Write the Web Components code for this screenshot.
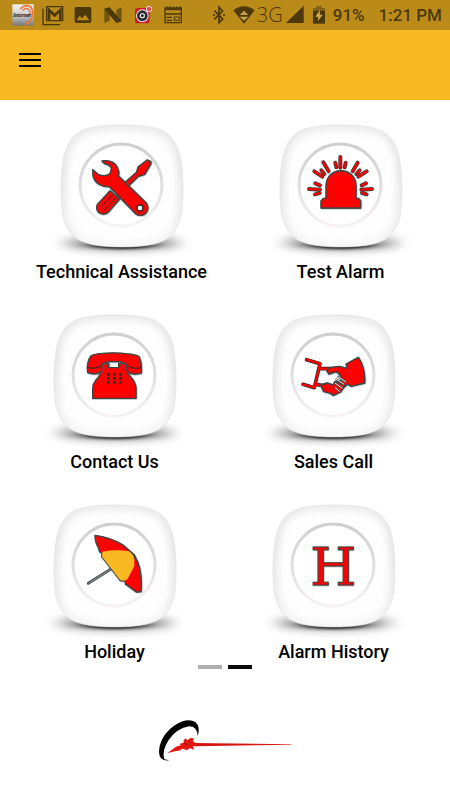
<!DOCTYPE html>
<html lang="en">
<head>
<meta charset="utf-8">
<meta name="viewport" content="width=device-width, initial-scale=1">
<title>Home</title>
<style>
html, body { margin: 0; background: #fff; font-family: Roboto, "Liberation Sans", sans-serif; color: #000; }
</style>
</head>
<body>
<home-screen></home-screen>
<script>
const define = (name, html) => {
  const template = document.createElement('template');
  template.innerHTML = html;
  customElements.define(name, class extends HTMLElement {
    constructor() {
      super();
      this.attachShadow({ mode: 'open' }).append(template.content.cloneNode(true));
    }
  });
};

define('status-bar', `
<style>
:host { display: flex; align-items: center; height: 30px; padding: 0 8px 0 12px; box-sizing: border-box; background: #bb8b1a; color: #4b380b; }
svg { display: block; flex: none; }
.group { display: flex; align-items: center; gap: 8px; }
.end { margin-left: auto; }
.network { display: flex; align-items: center; gap: 2px; }
.rate { font: 300 20px/30px "Open Sans", "Noto Sans", sans-serif; }
.text { font-size: 17px; line-height: 32px; font-weight: 500; white-space: nowrap; }
.time { margin-left: 6px; }
</style>
<div class="group">
  <svg width="22" height="22" viewBox="0 0 66 66">
    <defs><linearGradient id="g" x2="0" y2="1"><stop offset="0" stop-color="#f4f4f4"/><stop offset=".5" stop-color="#ccc"/><stop offset="1" stop-color="#777"/></linearGradient></defs>
    <path d="M1 1H65V65H1Z" fill="url(#g)"/>
    <path d="M25 16Q32 5 46 5Q61 7 62 25Q62 46 50 54Q47 59 40 62" fill="none" stroke="#f47432" stroke-width="5"/>
    <path d="M32 20Q38 12 46 14Q54 17 54 27Q52 35 45 36" fill="none" stroke="#f47432" stroke-width="4"/>
    <text x="3" y="38" font-family="Liberation Serif, serif" font-weight="700" font-style="italic" font-size="16" fill="#111">Interner</text>
  </svg>
  <svg width="22" height="22" viewBox="0 0 66 66" fill="none" stroke="#4b380b" stroke-width="4">
    <path d="M3 14V62H54"/><path d="M14 8H62V50H14Z"/><path d="M21 48V18L38 34L55 18V48" stroke-width="8"/>
  </svg>
  <svg width="22" height="22" viewBox="0 0 66 66"><path fill="#4b380b" fill-rule="evenodd" d="M13 9H53Q58 9 58 14V52Q58 57 53 57H13Q8 57 8 52V14Q8 9 13 9ZM14 49H52L40 32L30 43L23 35Z"/></svg>
  <svg width="22" height="22" viewBox="0 0 66 66"><path fill="#70540f" d="M7 14L23 10V50L7 57ZM43 17L59 10V52L43 56Z"/><path fill="#4b380b" d="M7 14L23 10L59 52L43 57Z"/></svg>
  <svg width="22" height="22" viewBox="0 0 66 66"><rect x="9" y="12" width="44" height="46" rx="8" fill="#d01d2b"/><circle cx="31" cy="35" r="19" fill="#eee"/><circle cx="31" cy="35" r="16" fill="#252b30"/><circle cx="31" cy="35" r="8" fill="#ddd"/><circle cx="31" cy="35" r="4" fill="#15191d"/><circle cx="51" cy="15" r="8" fill="#e94752" stroke="#f6dada" stroke-width="3"/></svg>
  <svg width="22" height="22" viewBox="0 0 66 66" fill="none" stroke="#4b380b"><path stroke-width="4" d="M9 12H58V56H9ZM9 30H58M14 40H30M14 49H30"/><path stroke-width="5" d="M9 16H58"/><path stroke-width="3" d="M14 7V14M24 7V14M34 7V14M44 7V14M54 7V14M37 39H52V49H37Z"/></svg>
</div>
<div class="group end">
  <svg width="12" height="22" viewBox="0 0 36 66" fill="none" stroke="#4b380b" stroke-width="5"><path d="M4 20L29 45L18 56V10L29 21L4 46"/><path d="M3 30V36M33 30V36"/></svg>
  <div class="network">
    <svg width="22" height="22" viewBox="0 0 66 66"><path fill="#4b380b" d="M1 19Q33-5 65 19L33 59Z"/><path fill="#c9a04a" d="M33 20L46 33H20ZM20 38H46L33 50Z"/></svg>
    <span class="rate">3G</span>
    <svg width="20" height="22" viewBox="0 0 60 66"><path fill="#4b380b" d="M56 5V57H3Z"/></svg>
  </div>
  <svg width="12" height="22" viewBox="0 0 36 66"><path fill="#83631a" d="M10 6H26V12H36V20H0V12H10Z"/><path fill="#4b380b" d="M0 20H36V59H0Z"/><path fill="#d3ad55" d="M21 18L7 38H16L14 52L29 32H20Z"/></svg>
  <span class="text">91%</span>
  <span class="text time">1:21 PM</span>
</div>`);

define('app-header', `
<style>
:host { display: flex; height: 70px; padding: 0 8px; box-sizing: border-box; background: #f9b922; }
button { display: flex; align-items: center; justify-content: center; width: 44px; height: 60px; padding: 0; border: 0; background: none; }
</style>
<button type="button" aria-label="Open menu"><svg width="22" height="16" viewBox="0 0 22 16"><path d="M0 2H22M0 8H22M0 14H22" stroke="#000" stroke-width="2"/></svg></button>`);

define('menu-tile', `
<style>
:host { display: block; flex: 1 1 0; min-width: 0; }
button { display: flex; flex-direction: column; align-items: center; width: 100%; padding: 0; border: 0; background: none; font: inherit; color: inherit; }
.face { display: grid; place-items: center; }
.face > * { grid-area: 1 / 1; }
.label { font-size: 18px; line-height: 28px; font-weight: 500; white-space: nowrap; }
::slotted(svg) { display: block; grid-area: 1 / 1; overflow: visible; }
svg { display: block; }
</style>
<button type="button">
  <span class="face">
    <svg width="150" height="144" viewBox="-75 -72 150 144" aria-hidden="true">
      <defs>
        <filter id="soft" x="-50%" y="-200%" width="200%" height="500%"><feGaussianBlur stdDeviation="8 4"/></filter>
        <filter id="dark" x="-50%" y="-200%" width="200%" height="500%"><feGaussianBlur stdDeviation="10 1.5"/></filter>
        <filter id="edge" x="-20%" y="-20%" width="140%" height="140%"><feGaussianBlur stdDeviation="4"/></filter>
        <linearGradient id="rim" x2="0" y2="1"><stop offset="0" stop-color="#dedede"/><stop offset=".4" stop-color="#d4d4d4"/><stop offset=".8" stop-color="#e2e2e2"/><stop offset="1" stop-color="#f0f0f0"/></linearGradient>
        <linearGradient id="line" x2="0" y2="1"><stop offset="0" stop-color="#cfced0"/><stop offset=".5" stop-color="#e0dee0"/><stop offset="1" stop-color="#f8f2f2"/></linearGradient>
        <path id="body" d="M0-61C20-61 33-59 41-55C50-50 55-42 58-30C61-15 62 5 60 24C59 36 54 46 45 53C35 59 20 61 0 61C-20 61-35 59-45 53C-54 46-59 36-60 24C-62 5-61-15-58-30C-55-42-50-50-41-55C-33-59-20-61 0-61Z"/>
        <clipPath id="clip"><use href="#body"/></clipPath>
      </defs>
      <ellipse cy="57" rx="58" ry="7" fill="#000" opacity=".4" filter="url(#soft)"/>
      <ellipse cy="59" rx="31" ry="4" fill="#000" filter="url(#dark)"/>
      <use href="#body" fill="#fefefe"/>
      <g clip-path="url(#clip)"><use href="#body" fill="none" stroke="url(#rim)" stroke-width="6" filter="url(#edge)"/></g>
      <use href="#body" fill="none" stroke="#ddd" stroke-width="1" opacity=".6"/>
      <circle cx="-1" cy="-1" r="41" fill="#fff" stroke="url(#line)" stroke-width="3"/>
    </svg>
    <slot name="icon"></slot>
  </span>
  <span class="label"><slot></slot></span>
</button>`);

define('tile-row', `
<style>
:host { display: flex; height: 190px; padding: 0 7px 0 5px; }
:host([lead]) { padding: 0 0 0 12px; }
</style><slot></slot>`);

define('page-dots', `
<style>
:host { display: flex; justify-content: center; gap: 6px; }
button { width: 24px; height: 4px; padding: 0; border: 0; background: #afafaf; }
button[aria-current] { background: #0a0a0a; }
</style>
<button type="button" aria-label="Page 1"></button><button type="button" aria-label="Page 2" aria-current="true"></button>`);

define('brand-logo', `
<style>:host { display: flex; justify-content: center; } svg { display: block; }</style>
<svg width="150" height="60" viewBox="0 0 450 180" role="img" aria-label="Company logo">
  <path d="M143 78Q142 49 117 49Q82 54 56 90Q34 124 43 148L58 151Q28 155 27 126Q28 80 72 47Q112 22 136 36Q152 50 143 78Z"/>
  <path fill="#d8140f" d="M132 99L424 103V104L132 109Z"/>
  <path fill="#e8130d" d="M52 130L78 110L92 106L90 101L101 98L101 91L107 85L112 91L122 84L131 85L129 94L137 99L140 105L129 109L132 120L120 114L111 121L105 116L91 117L94 121L75 124L65 126Z"/>
  <path d="M101 100L112 104M117 92L123 99M100 115L108 120" stroke="#671411" stroke-width="2"/>
</svg>`);

define('home-screen', `
<style>
:host { display: block; }
main { padding-top: 14px; }
page-dots { margin-top: -19px; }
brand-logo { margin-top: 41px; }
.ink { fill: #f00; stroke: #3c4646; stroke-width: 4; stroke-linejoin: round; filter: drop-shadow(1px 1px 2px #567070); }
.letter { font: 158px "DejaVu Serif", serif; text-anchor: middle; fill: #f00; stroke: #4a4040; stroke-width: 3; filter: drop-shadow(1px 1px 2px #567070); }
.detail { fill: none; stroke: #202828; stroke-width: 3; stroke-linecap: round; }
</style>
<status-bar></status-bar>
<app-header></app-header>
<main>
  <tile-row lead>
    <menu-tile>
      <svg slot="icon" width="84" height="84" viewBox="117 99 252 252">
        <path class="ink" d="M318 147L329 151L330 158L311 190L292 196L262 225L251 215L287 183L291 168Z"/>
        <path class="ink" d="M207 239L236 264L201 304C192 312 179 310 172 303C165 295 165 284 172 277Z"/>
        <path class="detail" d="M182 286L214 252M191 296L225 261"/>
        <path class="ink" d="M183 150C205 146 226 154 232 178Q235 187 232 194L315 275C322 285 322 298 314 307C306 315 292 315 284 308L205 227C181 228 160 216 156 194L155 176L171 190Q187 197 202 191Q212 183 211 170Q205 160 191 158Z"/>
        <circle cx="297" cy="291" r="9" fill="#fff" stroke="#252e2e" stroke-width="4"/>
      </svg>Technical Assistance
    </menu-tile>
    <menu-tile>
      <svg slot="icon" width="84" height="84" viewBox="114 99 252 252">
        <defs><path id="rays" d="M238 138V170M223 155L226 169M254 155L251 169M187 154L203 181M181 178L190 189M160 181L184 197M290 155L275 181M296 178L286 189M317 181L292 197M144 234L177 236M163 217L177 223M162 250L176 246M333 234L301 236M315 217L302 223M317 250L303 246"/></defs>
        <g fill="none" stroke-linecap="round"><use href="#rays" stroke="#354040" stroke-width="12"/><use href="#rays" stroke="#f00" stroke-width="7"/></g>
        <path class="ink" d="M195 262V225C195 164 285 164 285 225V262H293L299 270V291H180V270L187 262Z"/>
      </svg>Test Alarm
    </menu-tile>
  </tile-row>
  <tile-row>
    <menu-tile>
      <svg slot="icon" width="84" height="84" viewBox="100 102 252 252">
        <path class="ink" d="M186 192L207 190V203H237V190L260 192Q261 219 273 231Q289 247 289 268V295H159V265Q160 250 168 241Q187 224 186 192Z"/>
        <path class="ink" d="M144 218Q140 187 153 169Q160 162 190 160Q225 157 258 161Q290 163 298 170Q307 188 305 219Q301 222 285 222Q270 222 264 214Q260 206 262 195Q252 186 236 185H210Q194 186 186 194Q188 214 180 218Q166 225 144 218Z"/>
        <path class="detail" d="M145 203Q169 208 185 197M304 203Q281 209 264 198"/>
        <path fill="#243030" d="M202 219h8v8h-8zm18 0h8v8h-8zm18 0h8v8h-8zm-36 12h8v8h-8zm18 0h8v8h-8zm18 0h8v8h-8zm-36 12h8v8h-8zm18 0h8v8h-8zm18 0h8v8h-8z"/>
      </svg>Contact Us
    </menu-tile>
    <menu-tile>
      <svg slot="icon" width="84" height="84" viewBox="96 102 252 252">
        <g fill="none" stroke-linecap="round" stroke-linejoin="round"><path d="M140 179L180 191L163 263L129 253M176 206H210M168 253L190 257" stroke="#252e2e" stroke-width="11"/><path d="M140 179L180 191L163 263L129 253M176 206H210M168 253L190 257" stroke="#f00" stroke-width="7"/></g>
        <path class="ink" d="M200 212L212 202L238 199L262 205L258 192L295 172Q317 204 314 249L272 259L264 252L246 266L224 246L246 240Q244 224 228 215L207 222Z"/>
        <path class="ink" d="M182 255L201 249L219 255L225 244L254 257L242 276L220 286L211 280L190 274Z"/>
        <g fill="none" stroke-linecap="round"><path d="M229 238L251 252M234 230L257 245M226 250L246 264M226 263L238 274" stroke="#4b5050" stroke-width="6"/><path d="M229 238L251 252M234 230L257 245M226 250L246 264M226 263L238 274" stroke="#ddd" stroke-width="3"/></g>
      </svg>Sales Call
    </menu-tile>
  </tile-row>
  <tile-row>
    <menu-tile>
      <svg slot="icon" width="84" height="84" viewBox="100 87 252 252">
        <path d="M146 265L214 222" stroke="#4b5558" stroke-width="9" stroke-linecap="round"/><path d="M147 265L214 222" stroke="#8c9698" stroke-width="3"/>
        <path class="ink" d="M166 121Q215 128 250 150L283 179Q310 223 304 290L290 291L257 267V258L242 257L213 219L186 185L187 172L180 171L176 157Q167 145 166 121Z"/>
        <path fill="#f9b922" d="M188 170Q230 162 268 169L284 183V213L264 252L255 257L242 256L187 185Z"/>
        <path class="detail" d="M279 176L284 183V190"/>
      </svg>Holiday
    </menu-tile>
    <menu-tile>
      <svg slot="icon" width="84" height="84" viewBox="96 87 252 252"><text class="letter" x="220" y="270">H</text></svg>Alarm History
    </menu-tile>
  </tile-row>
  <page-dots></page-dots>
</main>
<brand-logo></brand-logo>`);
</script>
</body>
</html>
